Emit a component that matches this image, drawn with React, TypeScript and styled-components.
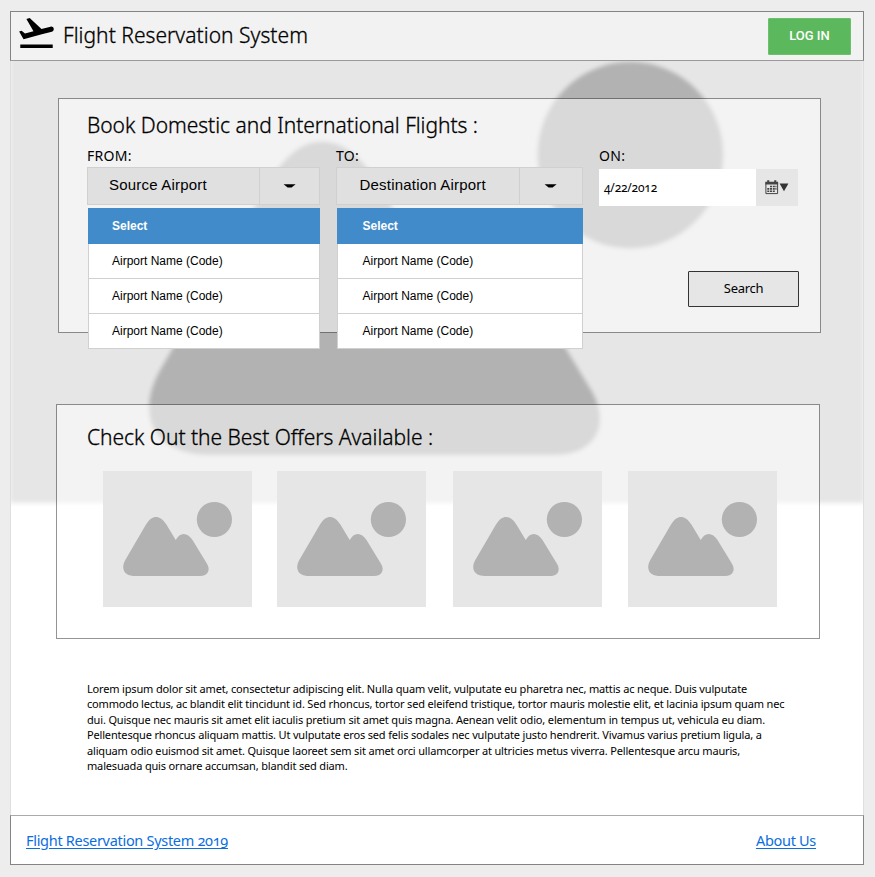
import React from "react";
import styled, { createGlobalStyle } from "styled-components";

const HUMANIST = '"Noto Sans", "Open Sans", sans-serif';
const GROTESK = '"Liberation Sans", Arial, sans-serif';

const GlobalStyle = createGlobalStyle`
  *, *::before, *::after { box-sizing: border-box; }
  body {
    margin: 0;
    background: #ededed;
    color: #000;
    font-family: ${HUMANIST};
    font-variant-numeric: oldstyle-nums;
  }
`;

const Sheet = styled.div`
  position: relative;
  display: flex;
  flex-direction: column;
  width: 854px;
  height: 854px;
  margin: 11px 0 12px 10px;
  background: #fff;
  border: 1px solid #dfdfdf;
  border-width: 0 1px;
`;

const Backdrop = styled.svg`
  position: absolute;
  left: 0;
  top: 49px;
  width: 852px;
  height: 450px;
`;

const Header = styled.header`
  position: relative;
  display: flex;
  align-items: center;
  height: 50px;
  margin: 0 -1px;
  padding: 0 12px 0 5px;
  background: #f2f2f2;
  border: 1px solid #848484;
  border-bottom-color: #9a9a9a;
`;

const Logo = styled.svg`
  width: 41px;
  height: 41px;
  margin-top: -8px;
`;

const Brand = styled.h1`
  flex: 1;
  margin: -3px 0 0 6px;
  font-size: 21px;
  font-weight: 300;
  line-height: 30px;
  letter-spacing: 0.03px;
  -webkit-text-stroke: 0.3px #000;
  white-space: nowrap;
`;

const LoginButton = styled.button`
  width: 83px;
  height: 37px;
  padding: 0 0 2px;
  border: 1px solid #6cc06c;
  border-radius: 1px;
  background: #5cb85c;
  color: #fff;
  font: 500 13px Roboto, ${GROTESK};
`;

const Panel = styled.section`
  position: relative;
  background: rgba(255, 255, 255, 0.5);
  background-clip: padding-box;
  border: 1px solid rgba(60, 60, 60, 0.55);
`;

const SearchPanel = styled(Panel)`
  width: 763px;
  height: 235px;
  margin: 37px 0 0 47px;
  padding: 10px 21px 0 28px;
`;

const OffersPanel = styled(Panel)`
  width: 764px;
  height: 235px;
  margin: 71px 0 0 45px;
  padding: 16px 40px 0 30px;
`;

const Heading = styled.h2`
  margin: 0;
  font-size: 21px;
  font-weight: 300;
  line-height: 32px;
  height: 32px;
  letter-spacing: -0.03px;
  -webkit-text-stroke: 0.3px #000;
  white-space: nowrap;
`;

const Fields = styled.div`
  display: flex;
  align-items: flex-start;
  padding-top: 6px;
`;

const Field = styled.div<{ $width: number; $gap?: number }>`
  position: relative;
  flex-shrink: 0;
  width: ${(p) => p.$width}px;
  margin-right: ${(p) => p.$gap ?? 0}px;
`;

const Label = styled.div`
  height: 20px;
  font-size: 14px;
  line-height: 18px;
  letter-spacing: 0.3px;
`;

const SelectBox = styled.div`
  display: flex;
  height: 38px;
  background: #e0e0e0;
  border: 1px solid #d0d0d0;
`;

const SelectText = styled.div<{ $indent: number }>`
  flex: 1;
  padding-left: ${(p) => p.$indent}px;
  font: 15px/34px ${GROTESK};
  letter-spacing: 0.2px;
  white-space: nowrap;
`;

const SelectToggle = styled.div<{ $width: number }>`
  display: flex;
  align-items: center;
  justify-content: center;
  width: ${(p) => p.$width}px;
  border-left: 1px solid #d0d0d0;
`;

const Menu = styled.ul<{ $indent: number }>`
  position: absolute;
  left: 1px;
  right: 0;
  top: 61px;
  z-index: 2;
  margin: 0;
  padding: 0;
  list-style: none;
  font: 12px ${GROTESK};
  text-indent: ${(p) => p.$indent}px;
`;

const MenuItem = styled.li<{ $active?: boolean }>`
  height: ${(p) => (p.$active ? 36 : 35)}px;
  line-height: ${(p) => (p.$active ? 36 : 34)}px;
  background: ${(p) => (p.$active ? "#428bca" : "#fff")};
  color: ${(p) => (p.$active ? "#fff" : "#000")};
  font-weight: ${(p) => (p.$active ? 700 : 400)};
  border: 1px solid #d0d0d0;
  border-width: ${(p) => (p.$active ? "0 1px" : "0 1px 1px")};
  border-color: ${(p) => (p.$active ? "#428bca" : "#d0d0d0")};
`;

const DateBox = styled.div`
  display: flex;
  width: 199px;
  height: 37px;
  margin-top: 2px;
  background: #fff;
`;

const DateValue = styled.div`
  flex: 1;
  padding-left: 5px;
  font-size: 12px;
  line-height: 38px;
  letter-spacing: -0.2px;
`;

const DateToggle = styled.div`
  display: flex;
  align-items: center;
  justify-content: center;
  width: 42px;
  background: #e6e6e6;
`;

const Actions = styled.div`
  display: flex;
  justify-content: flex-end;
  padding-top: 65px;
`;

const SearchButton = styled.button`
  width: 111px;
  height: 36px;
  padding: 0 0 2px;
  border: 1px solid #333;
  border-radius: 1px;
  background: #e6e6e6;
  color: #000;
  font: 13px ${HUMANIST};
  letter-spacing: -0.3px;
`;

const OfferGrid = styled.div`
  display: grid;
  grid-template-columns: 174px 175.7px 175.7px 149px;
  margin: 18px 0 0 16px;
`;

const OfferImage = styled.svg`
  display: block;
  width: 149px;
  height: 136px;
  background: #e6e6e6;
`;

const Copy = styled.p`
  margin: 42px 0 0 76px;
  font-size: 11px;
  line-height: 15.4px;
  letter-spacing: -0.165px;
  white-space: nowrap;
`;

const Footer = styled.footer`
  display: flex;
  justify-content: space-between;
  align-items: center;
  height: 50px;
  margin: auto -1px 0;
  padding: 0 47px 0 15px;
  background: #fff;
  border: 1px solid #848484;
  border-top-color: #aaa;
`;

const FooterLink = styled.a`
  color: #0a6ee0;
  font-size: 14.5px;
  letter-spacing: -0.3px;
  text-decoration: underline;
  text-underline-offset: 2px;
`;

const SCENERY =
  "M22.3 89 L42.7 54 C46.5 47.8 49.5 46 53 46 S59.8 47.8 63.7 54 L72.7 69 C75 65 77.5 63 80.7 63 S87 65 89.5 69 L103.7 92.3 C108 99 105 105 97 105 H32 C20 105 18 96.5 22.3 89Z";

const Scenery = () => (
  <g fill="#b2b2b2">
    <path d={SCENERY} />
    <circle cx="111.4" cy="48.5" r="17.6" />
  </g>
);

const Caret = () => (
  <svg width="14" height="4" viewBox="0 0 14 4">
    <path d="M0.6 0.3 H12.6 L8.6 3.6 H4.6Z" />
  </svg>
);

const CalendarIcon = () => (
  <svg width="24" height="15" viewBox="0 0 24 15">
    <path d="M0.9 2.5 V13.6 H12.6 V2.5" fill="none" stroke="#444" />
    <path
      d="M0.4 1.8 H13.1 V4.6 H0.4Z M2.2 0.3 H4.3 V3 H2.2Z M9.2 0.3 H11.3 V3 H9.2Z"
      fill="#444"
    />
    <path
      d="M5 6.5H7M7.8 6.5H9.8M10.4 6.5H11.5M2.3 8.9H4.3M5 8.9H7M7.8 8.9H9.8M10.4 8.9H11.5M2.3 11.3H4.3M5 11.3H7M7.8 11.3H9.8"
      stroke="#444"
      strokeWidth="1.6"
    />
    <path d="M14.6 3.6 H23.4 L19 11.2Z" fill="#333" />
  </svg>
);

const airports = ["Airport Name (Code)", "Airport Name (Code)", "Airport Name (Code)"];

interface AirportFieldProps {
  label: string;
  value: string;
  width: number;
  gap: number;
  toggleWidth: number;
  indent: number;
}

function AirportField({ label, value, width, gap, toggleWidth, indent }: AirportFieldProps) {
  return (
    <Field $width={width} $gap={gap}>
      <Label>{label}</Label>
      <SelectBox>
        <SelectText $indent={indent - 2}>{value}</SelectText>
        <SelectToggle $width={toggleWidth}>
          <Caret />
        </SelectToggle>
      </SelectBox>
      <Menu $indent={indent}>
        <MenuItem $active>Select</MenuItem>
        {airports.map((name, i) => (
          <MenuItem key={i}>{name}</MenuItem>
        ))}
      </Menu>
    </Field>
  );
}

export default function App() {
  return (
    <>
      <GlobalStyle />
      <Sheet>
        <Backdrop viewBox="0 0 852 450">
          <defs>
            <filter id="soft" x="-5%" y="-5%" width="110%" height="110%">
              <feGaussianBlur stdDeviation="1.9" />
            </filter>
          </defs>
          <g filter="url(#soft)">
            <rect x="-1" y="-10" width="854" height="453" fill="#e6e6e6" />
            <g transform="translate(31.2 -162.5) scale(5.28 5.31)">
              <Scenery />
            </g>
          </g>
        </Backdrop>
        <Header>
          <Logo viewBox="0 0 24 24" preserveAspectRatio="none">
            <path d="M2.5 19h19v2h-19zM22.07 9.64c-.21-.8-1.04-1.28-1.84-1.06L14.92 10l-6.9-6.43-1.93.51 4.14 7.17-4.97 1.33-1.97-1.54-1.45.39 1.82 3.16.77 1.33 1.6-.43 5.31-1.42 4.35-1.16L21 11.49c.81-.23 1.28-1.05 1.07-1.85z" />
          </Logo>
          <Brand>Flight Reservation System</Brand>
          <LoginButton>LOG IN</LoginButton>
        </Header>
        <SearchPanel>
          <Heading>Book Domestic and International Flights :</Heading>
          <Fields>
            <AirportField label="FROM:" value="Source Airport" width={233} gap={16} toggleWidth={60} indent={23} />
            <AirportField label="TO:" value="Destination Airport" width={247} gap={16} toggleWidth={63} indent={24.5} />
            <Field $width={199}>
              <Label>ON:</Label>
              <DateBox>
                <DateValue>4/22/2012</DateValue>
                <DateToggle>
                  <CalendarIcon />
                </DateToggle>
              </DateBox>
            </Field>
          </Fields>
          <Actions>
            <SearchButton>Search</SearchButton>
          </Actions>
        </SearchPanel>
        <OffersPanel>
          <Heading>Check Out the Best Offers Available :</Heading>
          <OfferGrid>
            {[0, 1, 2, 3].map((i) => (
              <OfferImage key={i} viewBox="0 0 149 136">
                <Scenery />
              </OfferImage>
            ))}
          </OfferGrid>
        </OffersPanel>
        <Copy>
          Lorem ipsum dolor sit amet, consectetur adipiscing elit. Nulla quam velit, vulputate eu pharetra nec, mattis ac neque. Duis vulputate
          <br />
          commodo lectus, ac blandit elit tincidunt id. Sed rhoncus, tortor sed eleifend tristique, tortor mauris molestie elit, et lacinia ipsum quam nec
          <br />
          dui. Quisque nec mauris sit amet elit iaculis pretium sit amet quis magna. Aenean velit odio, elementum in tempus ut, vehicula eu diam.
          <br />
          Pellentesque rhoncus aliquam mattis. Ut vulputate eros sed felis sodales nec vulputate justo hendrerit. Vivamus varius pretium ligula, a
          <br />
          aliquam odio euismod sit amet. Quisque laoreet sem sit amet orci ullamcorper at ultricies metus viverra. Pellentesque arcu mauris,
          <br />
          malesuada quis ornare accumsan, blandit sed diam.
        </Copy>
        <Footer>
          <FooterLink href="#">Flight Reservation System 2019</FooterLink>
          <FooterLink href="#">About Us</FooterLink>
        </Footer>
      </Sheet>
    </>
  );
}
